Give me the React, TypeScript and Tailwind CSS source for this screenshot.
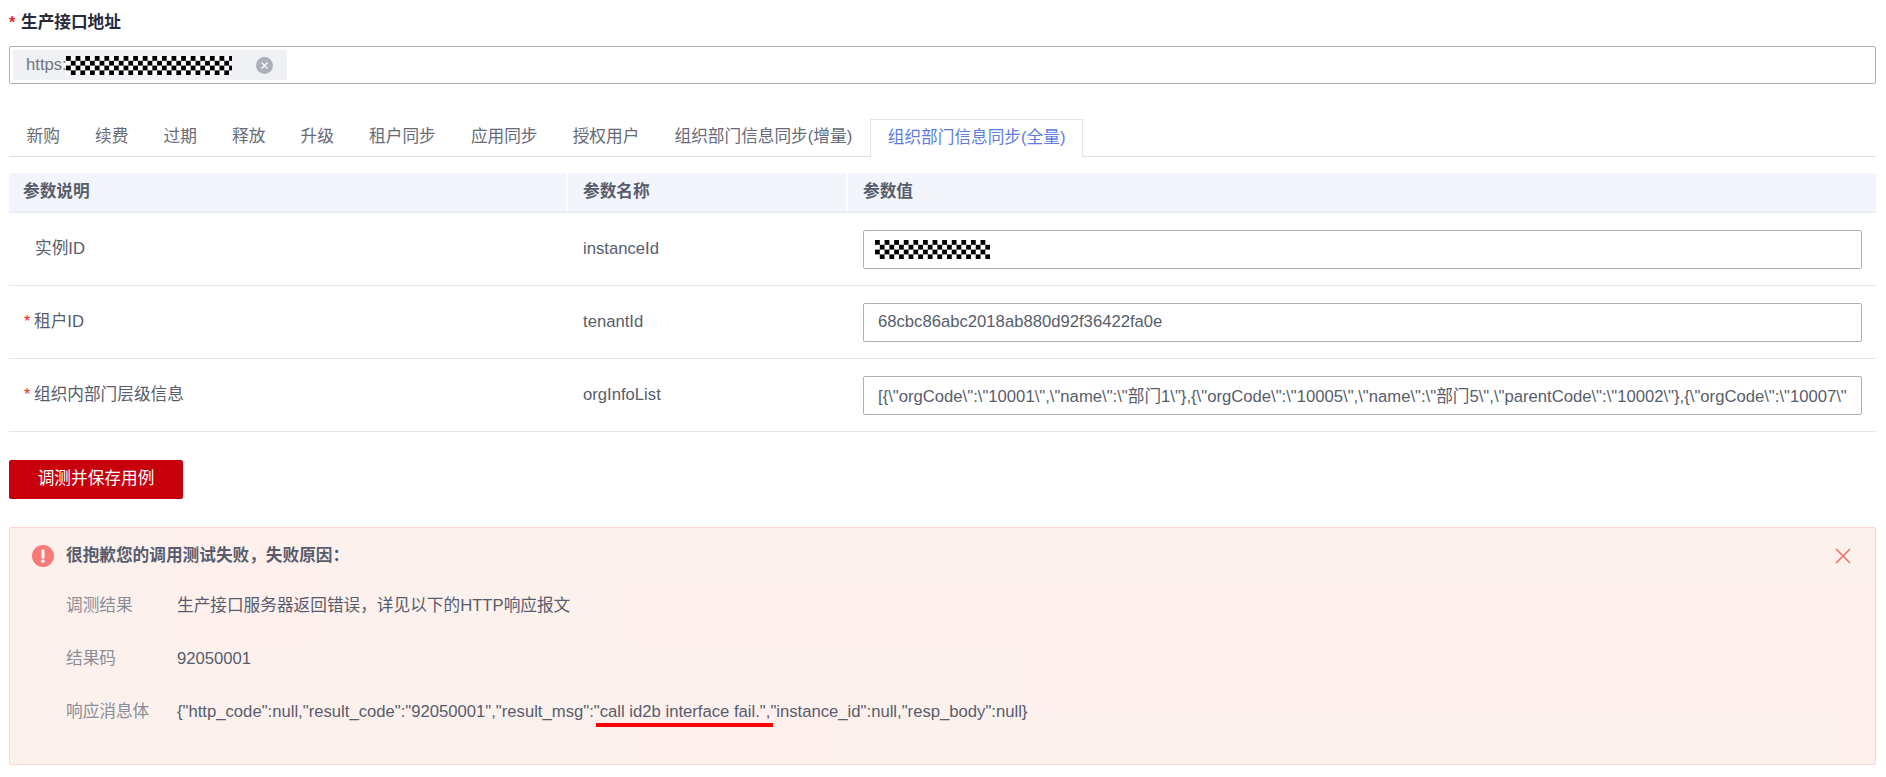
import React from 'react';

const tabs = ['新购', '续费', '过期', '释放', '升级', '租户同步', '应用同步', '授权用户', '组织部门信息同步(增量)'];

const orgInfo =
  '[{\\"orgCode\\":\\"10001\\",\\"name\\":\\"部门1\\"},{\\"orgCode\\":\\"10005\\",\\"name\\":\\"部门5\\",\\"parentCode\\":\\"10002\\"},{\\"orgCode\\":\\"10007\\",\\"name\\":\\"部门7\\"}]';

const Mosaic = ({ className }: { className: string }) => (
  <span className={`inline-block bg-[repeating-conic-gradient(#fff_0_25%,#000_0_50%)] bg-[length:9.6px_9.6px] ${className}`} />
);

const Star = () => <span className="text-[#e8262c] text-base leading-none w-[8px]">*</span>;

const ParamRow = ({ label, name, required, children }: { label: string; name: string; required?: boolean; children: React.ReactNode }) => (
  <div className="flex h-[73px] items-center border-b border-[#e4e5e9]">
    <div className="w-[559px] pl-[15px] flex items-center gap-[2px]">
      {required ? <Star /> : <span className="w-[8px]" />}
      <span className={required ? '' : 'pl-[1px]'}>{label}</span>
    </div>
    <div className="w-[280px] pl-[15px]">{name}</div>
    <div className="flex-1 pl-[15px] pr-[14px]">{children}</div>
  </div>
);

const ResultRow = ({ label, children }: { label: string; children: React.ReactNode }) => (
  <div className="flex h-[53px] items-center">
    <div className="w-[111px] text-[#8a8e99]">{label}</div>
    <div>{children}</div>
  </div>
);

export default function App() {
  return (
    <div className="min-h-[777px] bg-white pl-[9px] pr-[10px] text-[16.66px] text-[#575d6c] font-['Liberation_Sans','Noto_Sans_CJK_SC',sans-serif]">
      {/* Address */}
      <div className="h-[46px] flex items-center gap-[4px] font-bold text-[#252b3a]">
        <Star />
        <span>生产接口地址</span>
      </div>
      <div className="h-[38px] border border-[#adb0b8] rounded-[2px] flex items-center pl-[3px]">
        <div className="w-[274px] h-[30px] bg-[#f0f1f4] rounded-[2px] flex items-center pl-[13px] text-[#71757f]">
          <span className="w-[40px]">https:</span>
          <Mosaic className="w-[166px] h-[19px]" />
          <svg className="ml-[24px]" width="17" height="17" viewBox="0 0 17 17">
            <circle cx="8.5" cy="8.5" r="8.5" fill="#adb0b8" />
            <path d="M5.5 5.5l6 6M11.5 5.5l-6 6" stroke="#fff" strokeWidth="1.2" />
          </svg>
        </div>
      </div>

      {/* Tabs */}
      <div className="mt-[35px] h-[38px] flex border-b border-[#dfe1e6]">
        {tabs.map(t => (
          <div key={t} className="px-[17.6px] leading-[36px] text-[#666b77]">{t}</div>
        ))}
        <div className="px-[17px] h-[38px] leading-[36px] border border-b-0 border-[#e4e5e9] bg-white text-[#5e7ce0]">
          组织部门信息同步(全量)
        </div>
      </div>

      {/* Params table */}
      <div className="mt-[16px]">
        <div className="flex h-[40px] items-center bg-[#f2f5fc] border-b-2 border-[#e9edf5] font-bold">
          <div className="w-[559px] h-full flex items-center pl-[14px] border-r-2 border-white">参数说明</div>
          <div className="w-[280px] h-full flex items-center pl-[15px] border-r-2 border-white">参数名称</div>
          <div className="flex-1 pl-[15px]">参数值</div>
        </div>
        <ParamRow label="实例ID" name="instanceId">
          <div className="h-[39px] border border-[#adb0b8] rounded-[2px] flex items-center pl-[11px] bg-white">
            <Mosaic className="w-[115px] h-[19px]" />
          </div>
        </ParamRow>
        <ParamRow label="租户ID" name="tenantId" required>
          <input readOnly value="68cbc86abc2018ab880d92f36422fa0e" className="w-full h-[39px] border border-[#adb0b8] rounded-[2px] px-[14px] text-[#575d6c] outline-none" />
        </ParamRow>
        <ParamRow label="组织内部门层级信息" name="orgInfoList" required>
          <input readOnly value={orgInfo} className="w-full h-[39px] border border-[#adb0b8] rounded-[2px] px-[14px] text-[#575d6c] outline-none" />
        </ParamRow>
      </div>

      <button className="block mt-[28px] w-[174px] h-[39px] bg-[#c7000b] rounded-[2px] text-white">调测并保存用例</button>

      {/* Error alert */}
      <div className="relative mt-[28px] h-[238px] border border-[#ffd1d1] rounded-[2px] bg-[#fcf1ec] overflow-hidden">
        {/* faint tint blocks from the screenshot */}
        <div className="absolute left-[171px] top-0 w-[133px] h-[116px] bg-[#fff0ed]" />
        <div className="absolute left-[622px] top-[53px] right-0 h-[64px] bg-[#fff0ed]" />
        <div className="absolute left-[1018px] top-[117px] right-0 h-[64px] bg-[#fff0ed]" />
        <div className="absolute left-[1836px] top-[117px] right-0 bottom-0 bg-[#fff0ed]" />
        <div className="absolute left-[633px] top-[181px] w-[195px] bottom-0 bg-[#fff0ed]" />

        <div className="relative pl-[22px] pr-[22px]">
          <div className="h-[56px] flex items-center">
            <svg width="22" height="22" viewBox="0 0 22 22" className="shrink-0">
              <circle cx="11" cy="11" r="11" fill="#f97a77" />
              <rect x="9.5" y="4.5" width="3" height="9" rx="1" fill="#fff" />
              <circle cx="11" cy="16.3" r="1.7" fill="#fff" />
            </svg>
            <span className="ml-[12px] font-bold">很抱歉您的调用测试失败，失败原因：</span>
            <svg className="ml-auto mr-[2px]" width="16" height="16" viewBox="0 0 16 16">
              <path d="M1 1l14 14M15 1L1 15" stroke="#f66f6a" strokeWidth="1.6" />
            </svg>
          </div>
          <div className="pl-[34px] mt-[-4px]">
            <ResultRow label="调测结果">生产接口服务器返回错误，详见以下的HTTP响应报文</ResultRow>
            <ResultRow label="结果码">92050001</ResultRow>
            <ResultRow label="响应消息体">
              {'{"http_code":null,"result_code":"92050001","result_msg":'}
              <span className="relative">
                {'"call id2b interface fail."'}
                <span className="absolute left-[2px] -right-[7px] top-[21px] h-[4px] bg-[#ff0000]" />
              </span>
              {',"instance_id":null,"resp_body":null}'}
            </ResultRow>
          </div>
        </div>
      </div>
    </div>
  );
}
